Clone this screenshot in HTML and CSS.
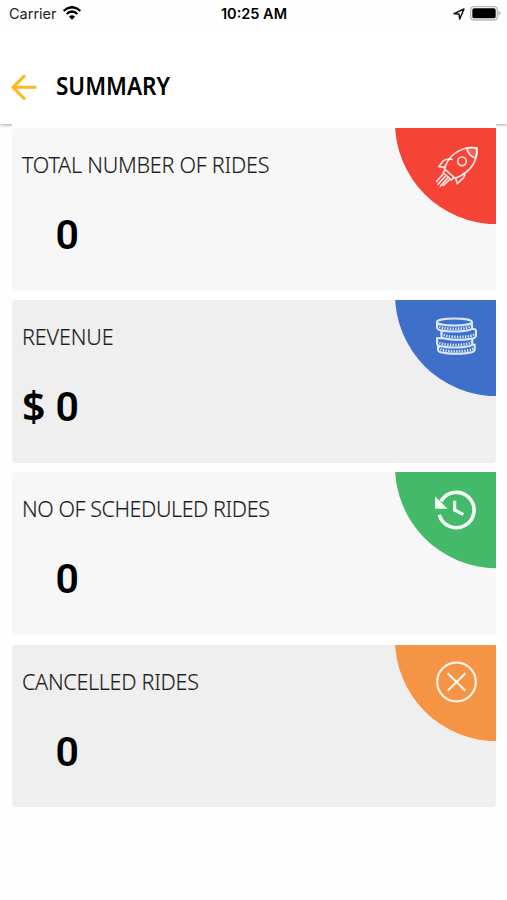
FILE: index.html
```html
<!DOCTYPE html>
<html lang="en">
<head>
<meta charset="utf-8">
<title>Summary</title>
<link rel="stylesheet" href="styles.css">
</head>
<body>
<div class="status">
  <div class="carrier"><span>Carrier</span>
    <svg width="18" height="14" viewBox="0 0 54 42" fill="none" stroke="#000" stroke-width="7"><path d="M2 15Q27-8 52 15M11 24Q27 9 43 24"/><path d="M18 32Q27 24 36 32L27 41Z" fill="#000" stroke="none"/></svg>
  </div>
  <div class="time">10:25 AM</div>
  <div class="indicators">
    <svg width="12" height="12" viewBox="0 0 36 36" fill="none" stroke="#111" stroke-width="4.500" stroke-linejoin="round"><path d="M3 17L33 3L20 33L18 18Z"/></svg>
    <svg width="31" height="15" viewBox="0 0 93 45"><rect x="2" y="2" width="80" height="40" rx="10" fill="#fff" stroke="#bbb" stroke-width="4"/><rect x="7" y="7" width="70" height="30" rx="5"/><path d="M85 15Q92 18 92 22T85 29Z" fill="#bbb"/></svg>
  </div>
</div>
<header class="header">
  <svg class="back" width="27" height="27" viewBox="0 0 81 81" fill="none" stroke="#fcb81e" stroke-width="9"><path d="M79 40H9M45 4L9 40L45 76"/></svg>
  <h1 class="title">SUMMARY</h1>
</header>
<main class="cards">
  <section class="card">
    <h2 class="label total">TOTAL NUMBER OF RIDES</h2>
    <div class="amount"><span class="unit"></span><span class="value">0</span></div>
    <svg class="corner" viewBox="45 39 303 289" preserveAspectRatio="none">
      <circle cx="351" cy="22" r="306" fill="#f54336"/>
      <g fill="none" stroke="#fff" stroke-opacity=".86" stroke-width="5" stroke-linejoin="round" stroke-linecap="round">
        <path d="M193 162Q209 111 260 99Q276 96 290 99Q293 123 280 147Q265 174 226 190Z"/>
        <path d="M260 99Q264 121 287 130Q293 115 290 99Q276 96 260 99Z" fill="#fff" fill-opacity=".15"/>
        <path d="M216 133Q202 130 190 137L176 155L195 157M253 174Q256 184 248 191L232 206L227 190"/>
        <circle cx="246" cy="139" r="13"/>
        <path d="M195 165L189 173L214 195L221 188M188 179L170 199M195 185L174 208M202 190L181 214M208 195L190 211"/>
      </g>
    </svg>
  </section>
  <section class="card alt">
    <h2 class="label revenue">REVENUE</h2>
    <div class="amount"><span class="unit">$</span><span class="value">0</span></div>
    <svg class="corner" viewBox="45 30 303 289" preserveAspectRatio="none">
      <circle cx="351" cy="13" r="306" fill="#3e70ca"/>
      <g fill="#3e70ca" stroke="#dbe8fd" stroke-width="6">
        <path d="M174 164V180C174 195 284 195 284 180V164Z"/>
        <path d="M176 172C176 188 282 188 282 172" fill="none" stroke-width="8" stroke-dasharray="4 4"/>
        <path d="M171 145V161C171 176 277 176 277 161V145Z"/>
        <path d="M173 153C173 169 275 169 275 153" fill="none" stroke-width="8" stroke-dasharray="4 4"/>
        <path d="M184 123V138C184 153 288 153 288 138V123C288 116 276 116 276 116Z"/>
        <path d="M186 129C186 145 286 145 286 129" fill="none" stroke-width="8" stroke-dasharray="4 4"/>
        <path d="M171 98V113C171 128 276 128 276 113V98Z"/>
        <path d="M173 104C173 121 274 121 274 104" fill="none" stroke-width="8" stroke-dasharray="4 4"/>
        <ellipse cx="223.500" cy="96" rx="52.500" ry="10.500"/>
      </g>
    </svg>
  </section>
  <section class="card">
    <h2 class="label scheduled">NO OF SCHEDULED RIDES</h2>
    <div class="amount"><span class="unit"></span><span class="value">0</span></div>
    <svg class="corner" viewBox="45 30 303 289" preserveAspectRatio="none">
      <circle cx="351" cy="13" r="306" fill="#43b969"/>
      <g fill="none" stroke="#f3fff5" stroke-width="11">
        <path d="M183 118A53 53 0 1 1 178 158"/>
        <path d="M224 116V144L250 158" stroke-width="9.500"/>
        <path d="M165 103V140H203Z" fill="#f3fff5" stroke="none"/>
      </g>
    </svg>
  </section>
  <section class="card alt">
    <h2 class="label cancelled">CANCELLED RIDES</h2>
    <div class="amount"><span class="unit"></span><span class="value">0</span></div>
    <svg class="corner" viewBox="45 30 303 289" preserveAspectRatio="none">
      <circle cx="351" cy="13" r="306" fill="#f59445"/>
      <g fill="none" stroke="#fff4e5" stroke-width="6.500">
        <circle cx="229.500" cy="141" r="58"/>
        <path d="M203 115L256 167M256 115L203 167"/>
      </g>
    </svg>
  </section>
</main>
</body>
</html>
```
FILE: styles.css
```css
* { box-sizing: border-box; }
body {
  margin: 0;
  height: 900px;
  overflow: hidden;
  background: #fefefe;
  color: #000;
  font-family: "Noto Sans", "Open Sans", sans-serif;
}
.status {
  display: grid;
  grid-template-columns: 1fr auto 1fr;
  align-items: center;
  height: 28px;
  padding: 0 6px 0 9px;
  font: 14.5px/28px Inter, sans-serif;
}
.carrier { display: flex; align-items: center; gap: 6px; color: #222; }
.carrier svg { margin-top: -2px; }
.time { margin-right: 2px; font-weight: 600; }
.indicators { display: flex; align-items: center; justify-content: flex-end; gap: 5px; margin-top: -1px; }
.header {
  display: flex;
  align-items: center;
  height: 96px;
  padding: 0 10px;
  background: #fff;
  box-shadow: 0 1px 3px rgba(0, 0, 0, .35);
  clip-path: inset(0 0 -5px 0);
}
.back { margin-top: 22px; }
.title {
  margin: 18px 0 0 19px;
  font-size: 26px;
  font-weight: 600;
  line-height: 36px;
  transform: scaleX(.865);
  transform-origin: left;
}
.cards {
  position: relative;
  display: flex;
  flex-direction: column;
  gap: 9.700px;
  margin: -1px 11px 0 12px;
  padding-top: 5px;
  background: #fefefe;
}
.card {
  position: relative;
  height: 162.500px;
  padding: 22px 10px 0;
  overflow: hidden;
  border-radius: 4px 0 4px 4px;
  background: #f7f7f7;
}
.alt { background: #efefef; }
.label {
  margin: 0;
  color: #1c1c1c;
  font-size: 21.500px;
  font-weight: 300;
  line-height: 30px;
  white-space: nowrap;
  -webkit-text-stroke: .15px #1c1c1c;
}
.total { letter-spacing: -.22px; }
.revenue { letter-spacing: -.1px; }
.scheduled { letter-spacing: -.43px; }
.cancelled { letter-spacing: -.28px; }
.amount {
  display: flex;
  margin-top: 29px;
  font-size: 41px;
  font-weight: 600;
  line-height: 50px;
}
.unit { width: 33.500px; }
.value { font-family: Roboto, sans-serif; font-size: 41px; line-height: 52px; }
.corner {
  position: absolute;
  top: 0;
  right: 0;
  width: 101px;
  height: 96.300px;
}
```
